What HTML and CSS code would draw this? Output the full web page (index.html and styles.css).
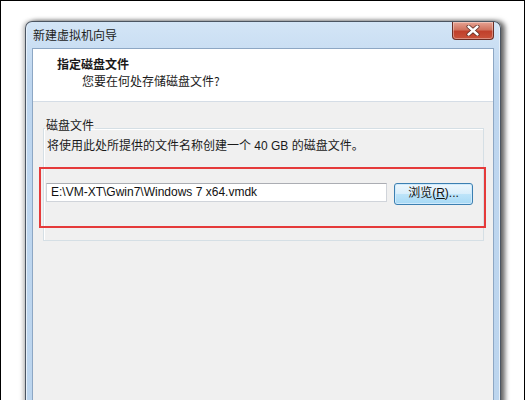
FILE: index.html
```html
<!DOCTYPE html>
<html lang="zh-CN">
<head>
<meta charset="utf-8">
<title>新建虚拟机向导</title>
<link rel="stylesheet" href="styles.css">
</head>
<body>
<div class="frame">
  <div class="window">
    <div class="titlebar">
      <span class="title">新建虚拟机向导</span>
      <div class="close">
        <svg width="14" height="11" viewBox="0 0 14 11">
          <path d="M2.5 1.5 L11.5 9.5 M11.5 1.5 L2.5 9.5" stroke="#5a2a22" stroke-width="4" stroke-linecap="round"/>
          <path d="M2.5 1.5 L11.5 9.5 M11.5 1.5 L2.5 9.5" stroke="#ffffff" stroke-width="2.4" stroke-linecap="round"/>
        </svg>
      </div>
    </div>
    <div class="client">
      <div class="header">
        <div class="h-title">指定磁盘文件</div>
        <div class="h-sub">您要在何处存储磁盘文件?</div>
      </div>
      <fieldset class="group">
        <legend class="group-label">磁盘文件</legend>
        <div class="desc">将使用此处所提供的文件名称创建一个 40 GB 的磁盘文件。</div>
        <div class="highlight">
          <div class="path-input">E:\VM-XT\Gwin7\Windows 7 x64.vmdk</div>
          <div class="browse">浏览(<u>R</u>)...</div>
        </div>
      </fieldset>
    </div>
  </div>
</div>
</body>
</html>
```
FILE: styles.css
```css
* { box-sizing: border-box; }
html, body {
  margin: 0;
  padding: 0;
  background: #fff;
}
body {
  font-family: "Liberation Sans", "Noto Sans CJK SC", sans-serif;
  font-size: 12px;
  color: #1a1a1a;
}
.frame {
  width: 525px;
  height: 400px;
  border: 1px solid #000;
  border-bottom: none;
  overflow: hidden;
  padding: 20px 0 0 24px;
  background: #fff;
}
.window {
  width: 476px;
  height: 390px;
  border: 1px solid #4b5561;
  border-bottom: none;
  border-radius: 7px 7px 0 0;
  background: linear-gradient(#d3e5f6, #bed6ef 60px, #bcd5ee);
  padding: 0 6px;
  display: flex;
  flex-direction: column;
  box-shadow: 4px 0 5px rgba(0,0,0,0.6), -2px 0 4px rgba(0,0,0,0.25), inset 1px 0 0 #e6f0fa, inset -1px 0 0 #e6f0fa;
}
.titlebar {
  height: 26px;
  display: flex;
  justify-content: space-between;
  align-items: flex-start;
}
.title {
  padding: 5px 0 0 1px;
  line-height: 16px;
  color: #222;
  font-family: "Noto Sans CJK SC", sans-serif;
}
.close {
  width: 42px;
  height: 18px;
  border: 1px solid #6b2e25;
  border-top: none;
  border-radius: 0 0 4px 4px;
  background: linear-gradient(#e6a393, #d0735f 45%, #c0402b 55%, #c9523a);
  display: flex;
  align-items: center;
  justify-content: center;
  box-shadow: inset 0 0 0 1px rgba(255,255,255,0.35);
}
.client {
  flex: 1;
  border: 1px solid #8da7c4;
  border-bottom: none;
  background: #f0f0f0;
}
.header {
  height: 53px;
  background: #fff;
  border-bottom: 1px solid #d5dde6;
  padding: 6px 0 0 24px;
  font-family: "Noto Sans CJK SC", sans-serif;
  line-height: 17px;
}
.h-title {
  font-weight: bold;
}
.h-sub {
  padding-left: 25px;
}
.group {
  margin: 16px 9px 0 10px;
  padding: 0 0 12px 3px;
  border: 1px solid #d5dfe5;
  box-shadow: inset 1px 1px 0 #fff;
  min-width: 0;
}
.group-label {
  padding: 0 1px 6px 1px;
  margin-left: -2px;
  line-height: 14px;
  font-family: "Noto Sans CJK SC", sans-serif;
}
.desc {
  line-height: 16px;
}
.highlight {
  width: 447px;
  height: 61px;
  margin: 13px 0 0 -8px;
  border: 2px solid #e53a3a;
  padding: 14px 0 0 5px;
  display: flex;
  align-items: flex-start;
}
.path-input {
  width: 341px;
  height: 19px;
  background: #fff;
  border: 1px solid #d0d4da;
  border-top-color: #abadb3;
  padding: 0 0 0 4px;
  line-height: 17px;
  font-size: 12px;
  color: #111;
}
.browse {
  width: 79px;
  height: 22px;
  margin-left: 7px;
  border: 1px solid #3c7fb1;
  border-radius: 3px;
  background: linear-gradient(#eef7fd, #d8eefb 50%, #bde4f9 51%, #a7d9f5);
  box-shadow: inset 0 0 0 1px #cfeafc;
  text-align: center;
  line-height: 19px;
  color: #111;
}
```
